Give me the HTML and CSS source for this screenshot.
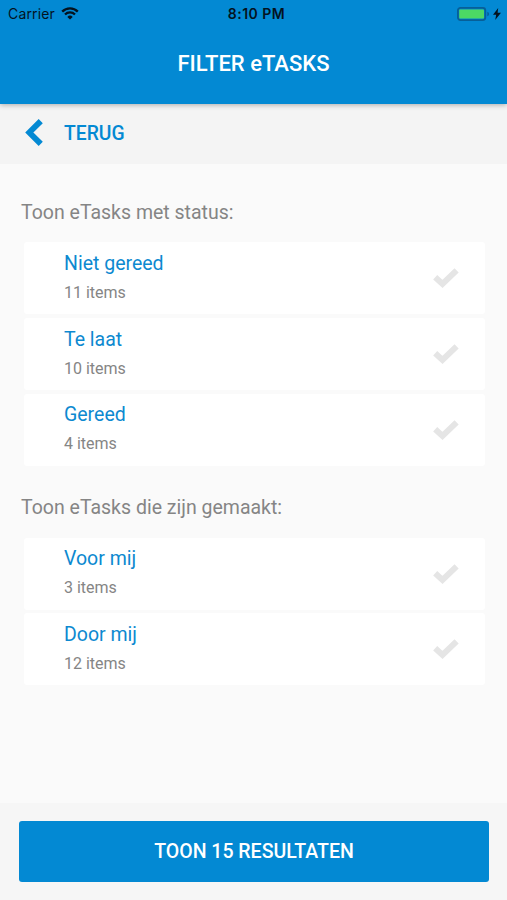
FILE: index.html
```html
<!DOCTYPE html>
<html lang="nl">
<head>
<meta charset="utf-8">
<title>Filter eTasks</title>
<link rel="stylesheet" href="styles.css">
</head>
<body>
<header class="header">
  <div class="status-bar">
    <div class="carrier"><span>Carrier</span>
      <svg class="wifi" viewBox="0 0 18 13" fill="none" stroke="#04131f" stroke-width="2.3"><path d="M1.2 4.6a11 11 0 0 1 15.6 0M4 7.5a7 7 0 0 1 10 0"/><path d="M9 12.6L6.3 9.9a3.8 3.8 0 0 1 5.4 0z" fill="#04131f" stroke="none"/></svg>
    </div>
    <div class="time">8:10 PM</div>
    <div class="power">
      <svg class="battery" viewBox="0 0 33 14"><rect x=".9" y=".9" width="27.4" height="12.2" rx="2.5" fill="none" stroke="#075f98" stroke-width="1.8"/><rect x="2.2" y="2.4" width="24.8" height="9.2" rx="1" fill="#4cd964"/><path d="M30.3 4.7q1.8.6 1.8 2.3t-1.8 2.3z" fill="#075f98"/></svg>
      <svg class="bolt" viewBox="0 0 8 12" fill="#04131f"><path d="M5.2 0L0 6.8h3.2L2.2 12 8 4.8H4.6z"/></svg>
    </div>
  </div>
  <h1 class="title">FILTER eTASKS</h1>
</header>
<nav class="back">
  <svg class="chevron" viewBox="0 0 18 26" fill="none" stroke="#0389d3" stroke-width="5.6"><path d="M15 2L4 13l11 11"/></svg>
  <span>TERUG</span>
</nav>
<main class="content">
  <section class="group">
    <h2 class="heading">Toon eTasks met status:</h2>
    <div class="list list-status">
      <div class="item"><div class="labels"><div class="name">Niet gereed</div><div class="count">11 items</div></div><svg class="check" viewBox="0 0 26 20"><path d="M2.2 9.2l7.3 6.7L23.6 2.4"/></svg></div>
      <div class="item"><div class="labels"><div class="name">Te laat</div><div class="count">10 items</div></div><svg class="check" viewBox="0 0 26 20"><path d="M2.2 9.2l7.3 6.7L23.6 2.4"/></svg></div>
      <div class="item"><div class="labels"><div class="name">Gereed</div><div class="count">4 items</div></div><svg class="check" viewBox="0 0 26 20"><path d="M2.2 9.2l7.3 6.7L23.6 2.4"/></svg></div>
    </div>
  </section>
  <section class="group">
    <h2 class="heading">Toon eTasks die zijn gemaakt:</h2>
    <div class="list">
      <div class="item"><div class="labels"><div class="name">Voor mij</div><div class="count">3 items</div></div><svg class="check" viewBox="0 0 26 20"><path d="M2.2 9.2l7.3 6.7L23.6 2.4"/></svg></div>
      <div class="item"><div class="labels"><div class="name">Door mij</div><div class="count">12 items</div></div><svg class="check" viewBox="0 0 26 20"><path d="M2.2 9.2l7.3 6.7L23.6 2.4"/></svg></div>
    </div>
  </section>
</main>
<footer class="footer"><button class="submit">TOON 15 RESULTATEN</button></footer>
</body>
</html>
```
FILE: styles.css
```css
* { box-sizing: border-box; }
body {
  margin: 0;
  height: 900px;
  display: flex;
  flex-direction: column;
  overflow: hidden;
  background: #fafafa;
  font-family: Roboto, sans-serif;
}
.header {
  position: relative;
  height: 104px;
  flex: none;
  background: #0389d3;
  box-shadow: 0 1px 5px rgba(0, 0, 0, .3);
}
.status-bar {
  display: grid;
  grid-template-columns: 1fr auto 1fr;
  align-items: center;
  height: 28px;
  padding: 0 6px 0 8px;
  color: #04131f;
  font: 14px/28px Inter, sans-serif;
}
.carrier, .power { display: flex; align-items: center; }
.carrier { gap: 6px; letter-spacing: .15px; }
.power { justify-content: flex-end; gap: 3px; }
.wifi { width: 18px; height: 13px; margin-top: -2px; }
.battery { width: 33px; height: 14px; margin-top: -1px; }
.bolt { width: 8px; height: 12px; margin-top: -1px; }
.time { padding-left: 4px; font-weight: 600; letter-spacing: .5px; }
.title {
  margin: 20px 0 0;
  color: #fff;
  font-size: 22px;
  line-height: 32px;
  font-weight: 500;
  text-align: center;
}
.back {
  display: flex;
  align-items: center;
  gap: 20px;
  height: 60px;
  flex: none;
  padding: 0 0 1px 25px;
  background: #f4f4f4;
  color: #0389d3;
  font-size: 19.3px;
  font-weight: 500;
}
.chevron { width: 19px; height: 27px; margin-top: -3px; }
.content { flex: 1; padding: 33px 22px 0 24px; }
.heading {
  margin: 0 0 13.3px -3px;
  color: #858585;
  font-size: 19.5px;
  line-height: 32px;
  font-weight: 400;
}
.list { display: flex; flex-direction: column; gap: 3.6px; }
.list-status { margin-bottom: 26.5px; }
.item {
  display: flex;
  align-items: center;
  justify-content: space-between;
  height: 72.1px;
  padding: 0 26px 0 40px;
  background: #fff;
  border-radius: 3px;
}
.labels { padding-bottom: 2px; }
.name { color: #0d89d0; font-size: 19.5px; line-height: 31px; }
.count { color: #858585; font-size: 16px; line-height: 28px; }
.check { width: 26px; height: 20px; fill: none; stroke: #e5e5e5; stroke-width: 6; }
.footer { height: 97px; flex: none; padding: 18px 18px 0 19px; background: #f6f6f6; }
.submit {
  display: block;
  width: 100%;
  height: 61px;
  padding: 0;
  border: 0;
  border-radius: 3px;
  background: #0389d3;
  color: #fff;
  font: 500 19.5px Roboto, sans-serif;
}
```
